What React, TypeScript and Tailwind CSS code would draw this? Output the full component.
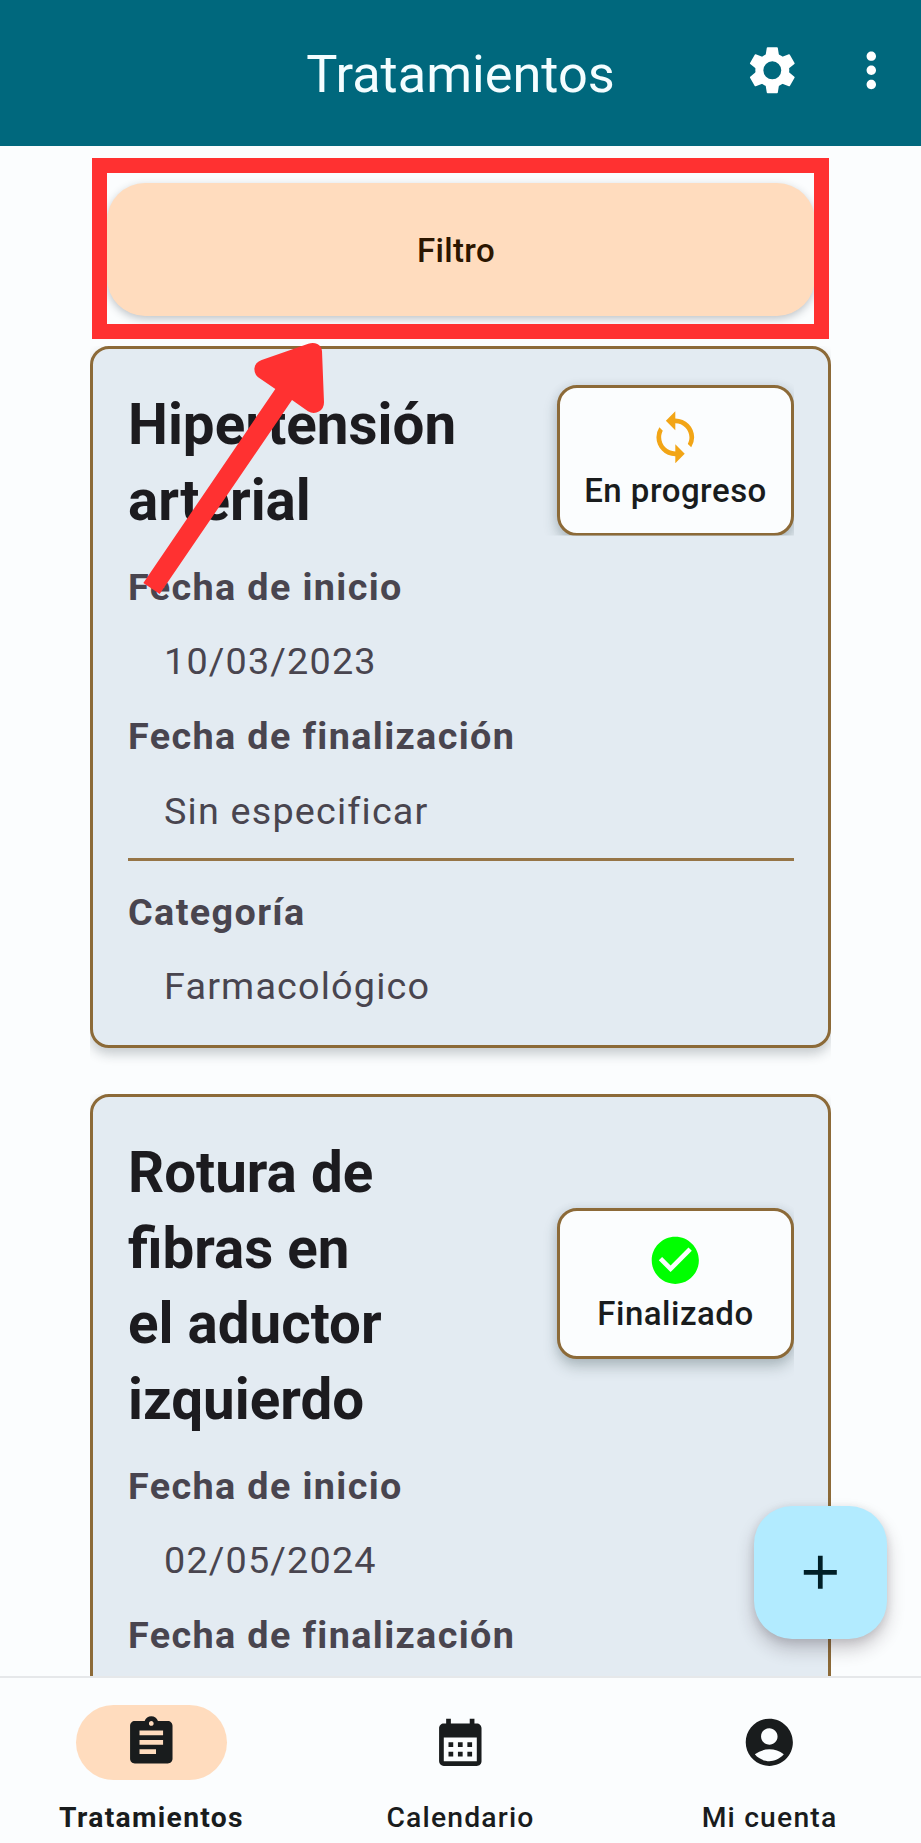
import React from "react";
import {
  MdAccountCircle,
  MdAdd,
  MdAssignment,
  MdCalendarMonth,
  MdCheckCircle,
  MdMoreVert,
  MdSync,
} from "react-icons/md";

type Status = "progress" | "done";

const toothAngles = [0, 60, 120, 180, 240, 300];

function GearIcon({ className }: { className?: string }) {
  return (
    <svg viewBox="-12 -12 24 24" className={className}>
      <circle r="5.5" fill="none" stroke="currentColor" strokeWidth="3.4" />
      {toothAngles.map((angle) => (
        <path
          key={angle}
          transform={`rotate(${angle})`}
          d="M-2-9.4H2L2.5-6.2H-2.5Z"
          fill="currentColor"
          stroke="currentColor"
          strokeWidth="0.7"
          strokeLinejoin="round"
        />
      ))}
    </svg>
  );
}

function StatusBadge({ status }: { status: Status }) {
  const clip =
    status === "progress"
      ? "[clip-path:inset(-30px_0px_0px_-30px)]"
      : "[clip-path:inset(-30px_0px_-30px_-30px)]";
  return (
    <div
      className={`-mt-[7px] flex h-[151px] w-[237px] shrink-0 flex-col items-center rounded-[20px] border-3 border-[#8c6a38] bg-[#fbfdfe] pt-[21px] shadow-[0_8px_14px_rgba(40,60,60,0.26),0_0_10px_rgba(40,60,80,0.10)] ${clip}`}
    >
      {status === "progress" ? (
        <MdSync className="size-[56.6px] text-[#f2a516]" />
      ) : (
        <MdCheckCircle className="size-[56.6px] text-[#00ff00]" />
      )}
      <span className="mt-[1.5px] text-[33px] leading-[47px] font-medium tracking-[0.5px] whitespace-nowrap text-[#191c1d]">
        {status === "progress" ? "En progreso" : "Finalizado"}
      </span>
    </div>
  );
}

function Field({ label, value }: { label: string; value?: string }) {
  return (
    <div className="text-[37.75px] leading-[74.75px] tracking-[1.18px] text-[#49454f]">
      <div className="font-bold tracking-[1.37px]">{label}</div>
      {value && <div className="pl-9">{value}</div>}
    </div>
  );
}

interface Treatment {
  title: string[];
  status: Status;
  start: string;
  end?: string;
  category?: string;
}

function TreatmentCard({ item }: { item: Treatment }) {
  return (
    <article className="h-[702px] w-[741px] shrink-0 rounded-[19px] border-3 border-[#8c6a38] bg-[#e3ebf2] pt-[39px] pr-[34px] pl-[35px] shadow-[0_6px_12px_rgba(30,40,50,0.24)] [clip-path:inset(0px_0px_-30px_0px)]">
      <div className="flex items-center justify-between">
        <h2 className="text-[56.5px] leading-[75.5px] font-bold whitespace-nowrap text-[#1c1b1f]">
          {item.title.map((line) => (
            <span key={line} className="block">
              {line}
            </span>
          ))}
        </h2>
        <StatusBadge status={item.status} />
      </div>
      <div className="mt-[10.5px]">
        <Field label="Fecha de inicio" value={item.start} />
        <Field label="Fecha de finalización" value={item.end} />
      </div>
      {item.category && (
        <>
          <hr className="mt-[9px] mb-[14px] border-t-3 border-[#967547]" />
          <Field label="Categoría" value={item.category} />
        </>
      )}
    </article>
  );
}

const treatments: Treatment[] = [
  {
    title: ["Hipertensión", "arterial"],
    status: "progress",
    start: "10/03/2023",
    end: "Sin especificar",
    category: "Farmacológico",
  },
  {
    title: ["Rotura de", "fibras en", "el aductor", "izquierdo"],
    status: "done",
    start: "02/05/2024",
  },
];

const tabs = [
  { label: "Tratamientos", Icon: MdAssignment, active: true },
  { label: "Calendario", Icon: MdCalendarMonth, active: false },
  { label: "Mi cuenta", Icon: MdAccountCircle, active: false },
];

export default function App() {
  return (
    <div className="relative flex h-[1843px] w-[921px] flex-col overflow-hidden bg-[#fbfdfe] font-[Roboto,sans-serif]">
      <header className="grid h-[146px] shrink-0 grid-cols-[1fr_auto_1fr] items-center bg-[#00687d] text-white">
        <span />
        <h1 className="pt-px text-[52.3px] leading-[60px] text-[#f4fdff]">Tratamientos</h1>
        <div className="flex justify-end gap-[43px] pr-[21px] pb-[5px]">
          <GearIcon className="size-[56.6px]" />
          <MdMoreVert className="size-[56.6px]" />
        </div>
      </header>

      <main className="flex min-h-0 flex-1 flex-col items-center overflow-hidden pt-[37px]">
        <button className="h-[133px] w-[708px] shrink-0 rounded-[38px] bg-[#ffdcbe] pt-[3px] pr-[9px] text-[33px] font-medium tracking-[0.35px] text-[#2c1600] shadow-[0_3px_9px_rgba(40,50,60,0.28)]">
          Filtro
        </button>
        <div className="mt-[30px] flex flex-col gap-[46px]">
          {treatments.map((item) => (
            <TreatmentCard key={item.start} item={item} />
          ))}
        </div>
      </main>

      <nav className="flex h-[167px] shrink-0 justify-center border-t-2 border-[#e6e8ea] bg-[#fbfdfe] pt-[27px] text-[#191c1d]">
        {tabs.map(({ label, Icon, active }) => (
          <div key={label} className="flex w-[309px] shrink-0 flex-col items-center">
            <div
              className={`flex h-[75px] w-[151px] items-center justify-center rounded-full ${active ? "bg-[#ffdcbe]" : ""}`}
            >
              <Icon className="size-[56.6px]" />
            </div>
            <span
              className={`mt-[19px] text-[28.3px] leading-[38px] ${active ? "font-bold tracking-[1.3px]" : "font-medium tracking-[1.18px]"}`}
            >
              {label}
            </span>
          </div>
        ))}
      </nav>

      <button className="absolute top-[1506px] left-[754px] flex size-[133px] items-center justify-center rounded-[38px] bg-[#b2ebff] text-[#001f27] shadow-[0_10px_18px_rgba(40,30,40,0.24),0_2px_8px_rgba(40,30,40,0.12)]">
        <MdAdd className="size-[56.6px]" />
      </button>

      <div className="absolute top-[158px] left-[92px] h-[181px] w-[737px] border-[15px] border-[#ff3131]" />
      <svg
        className="absolute top-[340px] left-[140px] h-[256px] w-[190px]"
        viewBox="180 570 570 768"
        fill="#ff3131"
      >
        <path d="M190 1299 586 717 541 686Q523 676 523 656 525 637 545 630L685 581Q700 576 712 582 725 589 726 604L732 757Q732 775 718 784 701 794 684 784L636 750 239 1332Z" />
      </svg>
    </div>
  );
}
